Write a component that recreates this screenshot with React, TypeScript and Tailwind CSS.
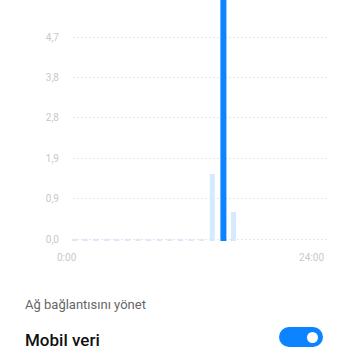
import React from "react";

const ticks = [
  { y: 37, label: "4,7" },
  { y: 77, label: "3,8" },
  { y: 117, label: "2,8" },
  { y: 158, label: "1,9" },
  { y: 198, label: "0,9" },
  { y: 239, label: "0,0" },
];

// hourly usage, bar heights in px
const bars = [2, 2, 2, 2, 2, 2, 2, 2, 2, 2, 2, 2, 2, 67, 241, 29];

function UsageChart() {
  const left = 73;
  const pitch = 10.6;
  const base = 241;
  return (
    <svg width="350" height="270" viewBox="0 0 350 270" className="block">
      {ticks.map((t) => (
        <g key={t.label}>
          <text
            x="59"
            y={t.y + 3.5}
            textAnchor="end"
            fontSize="10"
            fill="#c9c9c9"
            fontFamily="Roboto, sans-serif"
          >
            {t.label}
          </text>
          <line
            x1={left}
            x2="327"
            y1={t.y + 0.5}
            y2={t.y + 0.5}
            stroke="#e6e6e6"
            strokeWidth="1"
            strokeDasharray="2 2"
          />
        </g>
      ))}
      {bars.map((h, i) => {
        const x = left + pitch * i - 1;
        const selected = i === 14;
        return (
          <rect
            key={i}
            x={x}
            y={base - h}
            width={selected ? 6 : 5}
            height={h}
            fill={selected ? "#0d84ff" : "#d5eaff"}
          />
        );
      })}
      <text x="57" y="261" fontSize="10" fill="#c9c9c9" fontFamily="Roboto, sans-serif">
        0:00
      </text>
      <text
        x="324"
        y="261"
        textAnchor="end"
        fontSize="10"
        fill="#c9c9c9"
        fontFamily="Roboto, sans-serif"
      >
        24:00
      </text>
    </svg>
  );
}

export default function App() {
  return (
    <div className="w-[350px] h-[350px] overflow-hidden bg-white font-['Roboto',sans-serif]">
      <UsageChart />
      <div className="px-[25px] pt-[27px] text-[13px] leading-[16px] text-[#666666]">
        Ağ bağlantısını yönet
      </div>
      <div className="flex items-center justify-between pl-[25px] pr-[27px] pt-[14px]">
        <span className="text-[17px] leading-[20px] font-medium text-[#111111]">
          Mobil veri
        </span>
        <div className="mb-[6px] w-[44px] h-[20px] rounded-full bg-[#0d84ff] flex items-center justify-end pr-[5px]">
          <div className="w-[11px] h-[11px] rounded-full bg-white" />
        </div>
      </div>
    </div>
  );
}
